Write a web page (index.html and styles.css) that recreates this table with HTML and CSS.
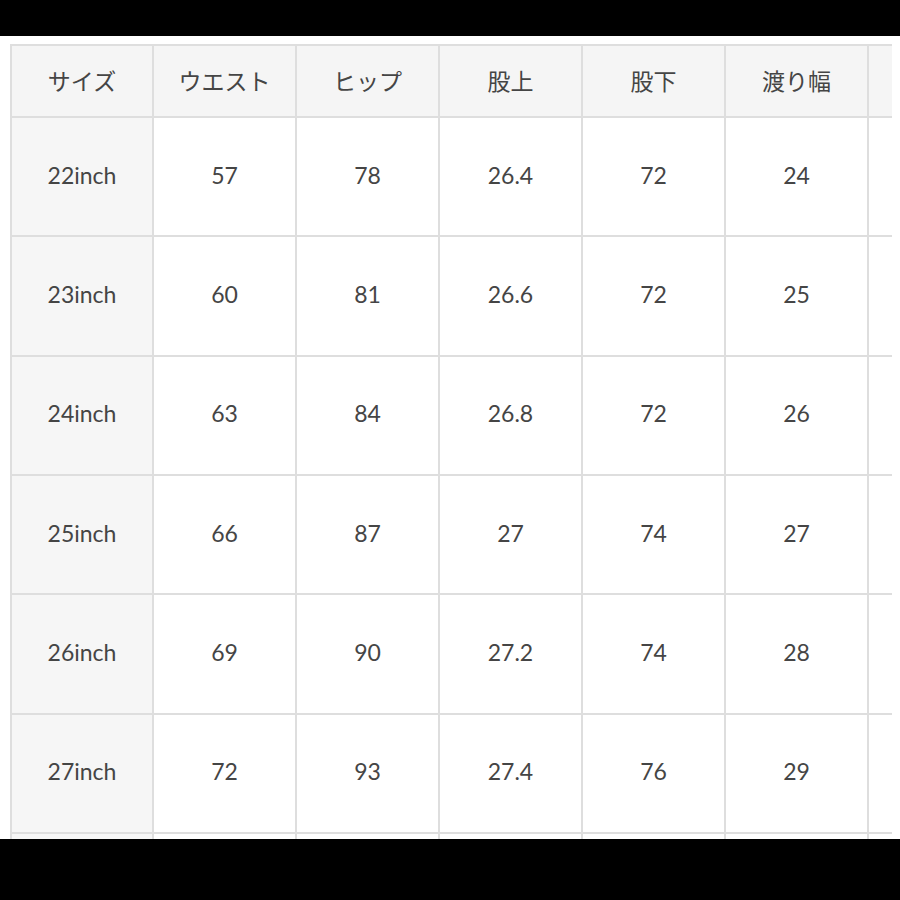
FILE: index.html
```html
<!DOCTYPE html>
<html lang="ja">
<head>
<meta charset="utf-8">
<title>サイズ表</title>
<link rel="stylesheet" href="styles.css">
</head>
<body>
<div class="screen">
  <div class="table">
    <div class="cell head">サイズ</div>
    <div class="cell head">ウエスト</div>
    <div class="cell head">ヒップ</div>
    <div class="cell head">股上</div>
    <div class="cell head">股下</div>
    <div class="cell head">渡り幅</div>
    <div class="cell head"></div>

    <div class="cell side">22inch</div>
    <div class="cell">57</div>
    <div class="cell">78</div>
    <div class="cell">26.4</div>
    <div class="cell">72</div>
    <div class="cell">24</div>
    <div class="cell"></div>

    <div class="cell side">23inch</div>
    <div class="cell">60</div>
    <div class="cell">81</div>
    <div class="cell">26.6</div>
    <div class="cell">72</div>
    <div class="cell">25</div>
    <div class="cell"></div>

    <div class="cell side">24inch</div>
    <div class="cell">63</div>
    <div class="cell">84</div>
    <div class="cell">26.8</div>
    <div class="cell">72</div>
    <div class="cell">26</div>
    <div class="cell"></div>

    <div class="cell side">25inch</div>
    <div class="cell">66</div>
    <div class="cell">87</div>
    <div class="cell">27</div>
    <div class="cell">74</div>
    <div class="cell">27</div>
    <div class="cell"></div>

    <div class="cell side">26inch</div>
    <div class="cell">69</div>
    <div class="cell">90</div>
    <div class="cell">27.2</div>
    <div class="cell">74</div>
    <div class="cell">28</div>
    <div class="cell"></div>

    <div class="cell side">27inch</div>
    <div class="cell">72</div>
    <div class="cell">93</div>
    <div class="cell">27.4</div>
    <div class="cell">76</div>
    <div class="cell">29</div>
    <div class="cell"></div>

    <div class="cell side"></div>
    <div class="cell"></div>
    <div class="cell"></div>
    <div class="cell"></div>
    <div class="cell"></div>
    <div class="cell"></div>
    <div class="cell"></div>
  </div>
</div>
</body>
</html>
```

FILE: styles.css
```css
html, body {
  margin: 0;
  padding: 0;
  background: #000;
}

.screen {
  margin-top: 36px;
  height: 803px;
  background: #fff;
  overflow: hidden;
  padding: 8px 0 0 10px;
  box-sizing: border-box;
}

.table {
  width: 882px;
  box-sizing: border-box;
  overflow: hidden;
  display: grid;
  grid-template-columns: 142px repeat(5, 143px) 160px;
  grid-template-rows: 72px repeat(6, 119.33px) 60px;
  border-top: 2px solid #dedede;
  border-left: 2px solid #dedede;
  font-family: Lato, "Noto Sans CJK JP", sans-serif;
  font-size: 23px;
  color: #454545;
}

.cell {
  display: flex;
  align-items: center;
  justify-content: center;
  box-sizing: border-box;
  padding-bottom: 4px;
  border-right: 2px solid #dedede;
  border-bottom: 2px solid #dedede;
  background: #fff;
}

.head {
  background: #f5f5f5;
  padding-bottom: 3px;
}

.side {
  background: #f6f6f6;
}
```
